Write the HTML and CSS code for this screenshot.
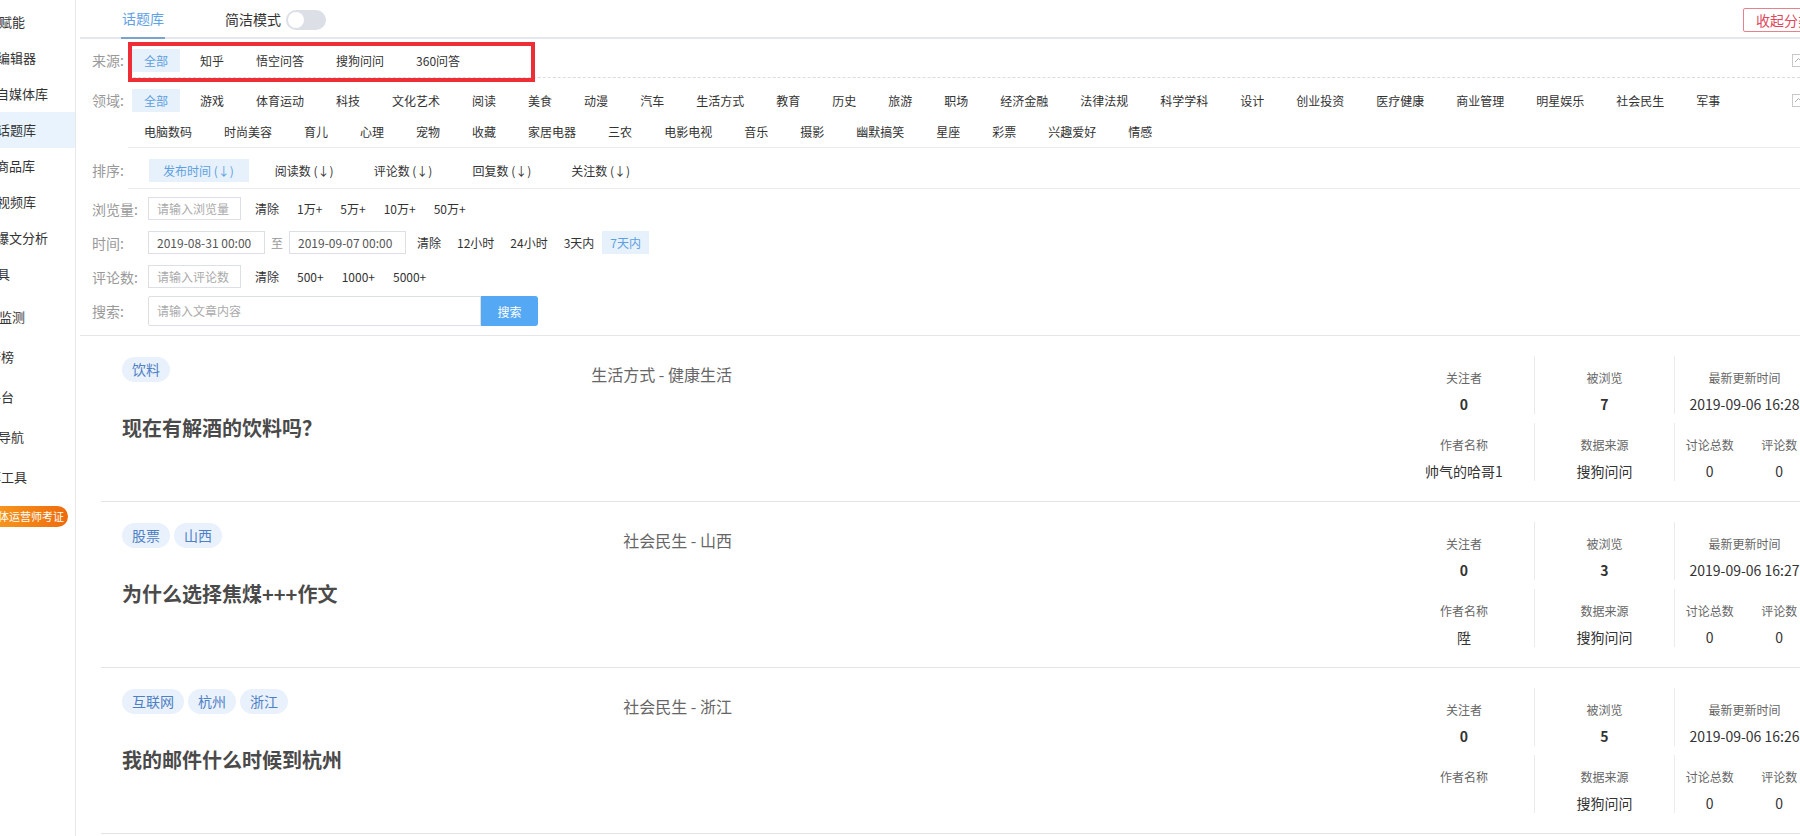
FILE: index.html
```html
<!DOCTYPE html>
<html lang="zh-CN">
<head>
<meta charset="utf-8">
<title>话题库</title>
<link rel="stylesheet" href="styles.css">
</head>
<body>
<div class="app">
  <aside class="sidebar">
    <ul class="nav nav-a">
      <li class="nav-item n1"><span>数据赋能</span></li>
      <li class="nav-item n2"><span>图文编辑器</span></li>
      <li class="nav-item n3"><span>自媒体库</span></li>
      <li class="nav-item n4 active"><span>话题库</span></li>
      <li class="nav-item n5"><span>商品库</span></li>
      <li class="nav-item n6"><span>视频库</span></li>
      <li class="nav-item n7"><span>爆文分析</span></li>
      <li class="nav-item n8"><span>工具</span></li>
    </ul>
    <ul class="nav nav-b">
      <li class="nav-item n9"><span>数据监测</span></li>
      <li class="nav-item n10"><span>排行榜</span></li>
      <li class="nav-item n11"><span>创作平台</span></li>
      <li class="nav-item n12"><span>网址导航</span></li>
      <li class="nav-item n13"><span>效率工具</span></li>
    </ul>
    <div class="badge">新媒体运营师考证</div>
  </aside>

  <main class="main">
    <header class="topbar">
      <div class="tabs">
        <div class="tab active">话题库</div>
        <div class="mode">简洁模式<span class="switch"><span class="knob"></span></span></div>
      </div>
      <button class="collapse-btn">收起分类</button>
    </header>

    <section class="filters">
      <div class="frow">
        <span class="flabel">来源:</span>
        <div class="fbody fb-src">
          <div class="opts">
            <span class="opt on">全部</span>
            <span class="opt">知乎</span>
            <span class="opt">悟空问答</span>
            <span class="opt">搜狗问问</span>
            <span class="opt">360问答</span>
          </div>
          <span class="fold"><svg width="13" height="13" viewBox="0 0 13 13"><rect x="0.5" y="0.5" width="12" height="12" fill="none" stroke="#c8c8c8"/><path d="M3 8 L6.5 4.5 L10 8" fill="none" stroke="#b0b0b0" stroke-width="1"/></svg></span>
        </div>
      </div>

      <div class="frow">
        <span class="flabel">领域:</span>
        <div class="fbody fb-field">
          <div class="opts">
            <span class="opt on">全部</span>
            <span class="opt">游戏</span>
            <span class="opt">体育运动</span>
            <span class="opt">科技</span>
            <span class="opt">文化艺术</span>
            <span class="opt">阅读</span>
            <span class="opt">美食</span>
            <span class="opt">动漫</span>
            <span class="opt">汽车</span>
            <span class="opt">生活方式</span>
            <span class="opt">教育</span>
            <span class="opt">历史</span>
            <span class="opt">旅游</span>
            <span class="opt">职场</span>
            <span class="opt">经济金融</span>
            <span class="opt">法律法规</span>
            <span class="opt">科学学科</span>
            <span class="opt">设计</span>
            <span class="opt">创业投资</span>
            <span class="opt">医疗健康</span>
            <span class="opt">商业管理</span>
            <span class="opt">明星娱乐</span>
            <span class="opt">社会民生</span>
            <span class="opt">军事</span>
            <span class="opt">电脑数码</span>
            <span class="opt">时尚美容</span>
            <span class="opt">育儿</span>
            <span class="opt">心理</span>
            <span class="opt">宠物</span>
            <span class="opt">收藏</span>
            <span class="opt">家居电器</span>
            <span class="opt">三农</span>
            <span class="opt">电影电视</span>
            <span class="opt">音乐</span>
            <span class="opt">摄影</span>
            <span class="opt">幽默搞笑</span>
            <span class="opt">星座</span>
            <span class="opt">彩票</span>
            <span class="opt">兴趣爱好</span>
            <span class="opt">情感</span>
          </div>
          <span class="fold"><svg width="13" height="13" viewBox="0 0 13 13"><rect x="0.5" y="0.5" width="12" height="12" fill="none" stroke="#c8c8c8"/><path d="M3 8 L6.5 4.5 L10 8" fill="none" stroke="#b0b0b0" stroke-width="1"/></svg></span>
        </div>
      </div>

      <div class="frow">
        <span class="flabel">排序:</span>
        <div class="fbody fb-sort">
          <div class="opts">
            <span class="sort on">发布时间 (↓)</span>
            <span class="sort">阅读数 (↓)</span>
            <span class="sort">评论数 (↓)</span>
            <span class="sort">回复数 (↓)</span>
            <span class="sort">关注数 (↓)</span>
          </div>
        </div>
      </div>

      <div class="inputs">
        <div class="irow">
          <span class="ilabel">浏览量:</span>
          <span class="inp inp-s">请输入浏览量</span>
          <span class="qk">清除</span>
          <span class="qk">1万+</span>
          <span class="qk">5万+</span>
          <span class="qk">10万+</span>
          <span class="qk">50万+</span>
        </div>
        <div class="irow irow-time">
          <span class="ilabel">时间:</span>
          <span class="inp inp-d">2019-08-31 00:00</span>
          <span class="to">至</span>
          <span class="inp inp-d">2019-09-07 00:00</span>
          <span class="qk">清除</span>
          <span class="qk">12小时</span>
          <span class="qk">24小时</span>
          <span class="qk">3天内</span>
          <span class="qk on">7天内</span>
        </div>
        <div class="irow">
          <span class="ilabel">评论数:</span>
          <span class="inp inp-s">请输入评论数</span>
          <span class="qk">清除</span>
          <span class="qk">500+</span>
          <span class="qk">1000+</span>
          <span class="qk">5000+</span>
        </div>
        <div class="irow irow-search">
          <span class="ilabel">搜索:</span>
          <span class="inp inp-q">请输入文章内容</span>
          <button class="sbtn">搜索</button>
        </div>
      </div>
    </section>

    <section class="cards">
      <article class="card">
        <div class="card-main">
          <div class="card-top">
            <div class="tags"><span class="tag">饮料</span></div>
            <div class="cat">生活方式 - 健康生活</div>
          </div>
          <h2 class="title">现在有解酒的饮料吗？</h2>
        </div>
        <div class="stats">
          <div class="cell"><div class="lbl">关注者</div><div class="val b">0</div></div>
          <div class="cell"><div class="lbl">被浏览</div><div class="val b">7</div></div>
          <div class="cell"><div class="lbl">最新更新时间</div><div class="val">2019-09-06 16:28</div></div>
          <div class="cell"><div class="lbl">作者名称</div><div class="val">帅气的哈哥1</div></div>
          <div class="cell"><div class="lbl">数据来源</div><div class="val">搜狗问问</div></div>
          <div class="cell split">
            <div class="sub"><div class="lbl">讨论总数</div><div class="val">0</div></div>
            <div class="sub"><div class="lbl">评论数</div><div class="val">0</div></div>
          </div>
        </div>
      </article>

      <article class="card">
        <div class="card-main">
          <div class="card-top">
            <div class="tags"><span class="tag">股票</span><span class="tag">山西</span></div>
            <div class="cat">社会民生 - 山西</div>
          </div>
          <h2 class="title">为什么选择焦煤+++作文</h2>
        </div>
        <div class="stats">
          <div class="cell"><div class="lbl">关注者</div><div class="val b">0</div></div>
          <div class="cell"><div class="lbl">被浏览</div><div class="val b">3</div></div>
          <div class="cell"><div class="lbl">最新更新时间</div><div class="val">2019-09-06 16:27</div></div>
          <div class="cell"><div class="lbl">作者名称</div><div class="val">陞</div></div>
          <div class="cell"><div class="lbl">数据来源</div><div class="val">搜狗问问</div></div>
          <div class="cell split">
            <div class="sub"><div class="lbl">讨论总数</div><div class="val">0</div></div>
            <div class="sub"><div class="lbl">评论数</div><div class="val">0</div></div>
          </div>
        </div>
      </article>

      <article class="card">
        <div class="card-main">
          <div class="card-top">
            <div class="tags"><span class="tag">互联网</span><span class="tag">杭州</span><span class="tag">浙江</span></div>
            <div class="cat">社会民生 - 浙江</div>
          </div>
          <h2 class="title">我的邮件什么时候到杭州</h2>
        </div>
        <div class="stats">
          <div class="cell"><div class="lbl">关注者</div><div class="val b">0</div></div>
          <div class="cell"><div class="lbl">被浏览</div><div class="val b">5</div></div>
          <div class="cell"><div class="lbl">最新更新时间</div><div class="val">2019-09-06 16:26</div></div>
          <div class="cell"><div class="lbl">作者名称</div><div class="val">&nbsp;</div></div>
          <div class="cell"><div class="lbl">数据来源</div><div class="val">搜狗问问</div></div>
          <div class="cell split">
            <div class="sub"><div class="lbl">讨论总数</div><div class="val">0</div></div>
            <div class="sub"><div class="lbl">评论数</div><div class="val">0</div></div>
          </div>
        </div>
      </article>
    </section>
  </main>

  <div class="annot"></div>
</div>
</body>
</html>
```

FILE: styles.css
```css
* { box-sizing: border-box; margin: 0; padding: 0; }
html, body { width: 1800px; height: 836px; overflow: hidden; background: #fff; }
body {
  font-family: "Noto Sans CJK SC", "Microsoft YaHei", "Liberation Sans", sans-serif;
  font-size: 12px;
  color: #333;
}
button { font-family: inherit; cursor: pointer; }

.app { position: relative; display: flex; height: 836px; }

/* ---------- sidebar ---------- */
.sidebar {
  width: 76px;
  flex: none;
  border-right: 1px solid #e8e8e8;
  overflow: hidden;
  padding-top: 4px;
}
.nav { list-style: none; }
.nav-item {
  height: 36px;
  line-height: 36px;
  font-size: 13px;
  color: #333;
  white-space: nowrap;
}
.nav-item span { display: block; }
.nav-item.active { background: #e8f3fd; }
.nav-b { margin-top: 5px; }
.nav-b .nav-item { height: 40px; line-height: 40px; }
.n1 span { margin-left: -27px; }
.n2 span { margin-left: -29px; }
.n3 span { margin-left: -4px; }
.n4 span { margin-left: -3px; }
.n5 span { margin-left: -4px; }
.n6 span { margin-left: -3px; }
.n7 span { margin-left: -4px; }
.n8 span { margin-left: -16px; }
.n9 span { margin-left: -27px; }
.n10 span { margin-left: -25px; }
.n11 span { margin-left: -38px; }
.n12 span { margin-left: -28px; }
.n13 span { margin-left: -25px; }
.badge {
  margin-top: 9px;
  margin-left: -32px;
  width: 100px;
  height: 21px;
  line-height: 21px;
  border-radius: 11px;
  background: linear-gradient(90deg, #f9a824, #ee6b0d);
  color: #fff;
  font-size: 11px;
  text-align: right;
  padding-right: 4px;
  white-space: nowrap;
  overflow: hidden;
}

/* ---------- main ---------- */
.main {
  width: 1764px;
  flex: none;
  padding-left: 4px;
}
.topbar {
  height: 39px;
  border-bottom: 2px solid #e4e7ed;
  display: flex;
  justify-content: space-between;
  padding-right: 15px;
}
.tabs { display: flex; align-items: center; }
.tab {
  position: relative;
  margin-left: 41px;
  padding: 0 1px;
  height: 37px;
  line-height: 37px;
  font-size: 14px;
  color: #5fa2e6;
}
.tab.active::after {
  content: "";
  position: absolute;
  left: 0; right: 0; bottom: -2px;
  height: 2px;
  background: #7aa3cf;
}
.mode {
  margin-left: 60px;
  display: flex;
  align-items: center;
  font-size: 14px;
  color: #333;
}
.switch {
  position: relative;
  margin-left: 5px;
  margin-top: 2px;
  width: 40px;
  height: 20px;
  border-radius: 10px;
  background: #dcdfe6;
}
.knob {
  position: absolute;
  left: 2px; top: 2px;
  width: 16px; height: 16px;
  border-radius: 50%;
  background: #fff;
}
.collapse-btn {
  margin-top: 8px;
  height: 24px;
  padding: 0 12px;
  border: 1px solid #e6828d;
  border-radius: 2px;
  background: #fff;
  color: #e0475a;
  font-size: 14px;
  line-height: 22px;
  align-self: flex-start;
}

/* ---------- filters ---------- */
.filters {
  padding-left: 12px;
  padding-right: 35px;
  border-bottom: 1px solid #e6e6e6;
}
.frow { display: flex; align-items: flex-start; }
.flabel {
  width: 36px;
  flex: none;
  font-size: 14px;
  color: #999;
  line-height: 23px;
}
.frow:nth-child(1) .flabel { margin-top: 10px; }
.frow:nth-child(2) .flabel { margin-top: 11px; }
.frow:nth-child(3) .flabel { margin-top: 11px; }
.fbody {
  flex: 1;
  display: flex;
  align-items: flex-start;
}
.fb-src { padding: 10px 0 5px 4px; border-bottom: 1px dashed #dcdcdc; }
.fb-field { padding: 11px 0 4px 4px; border-bottom: 1px solid #ececec; }
.fb-sort { padding: 11px 0 6px 21px; border-bottom: 1px solid #ececec; }
.opts { flex: 1; display: flex; flex-wrap: wrap; row-gap: 8px; }
.opt {
  padding: 0 12px;
  margin-right: 8px;
  line-height: 23px;
  font-size: 12px;
  color: #333;
  white-space: nowrap;
}
.opt.on, .sort.on, .qk.on { background: #e6f1fc; color: #5d9fe0; }
.fold { flex: none; margin-top: 5px; width: 13px; height: 13px; }
.fold svg { display: block; }
.sort {
  padding: 0 14px;
  margin-right: 12px;
  line-height: 23px;
  font-size: 12px;
  color: #333;
  white-space: nowrap;
}
.sort:first-child { padding: 0 15px 0 14px; }

.inputs {
  display: flex;
  flex-direction: column;
  gap: 11px;
  padding: 8px 0 9px;
}
.irow { display: flex; align-items: center; height: 23px; }
.irow-search { height: 30px; margin-top: -3px; }
.ilabel {
  width: 56px;
  flex: none;
  font-size: 14px;
  color: #999;
}
.inp {
  height: 23px;
  line-height: 21px;
  border: 1px solid #dcdfe6;
  padding: 0 8px;
  font-size: 12px;
  color: #999;
  white-space: nowrap;
}
.inp-s { width: 93px; color: #aaa; }
.inp-d { width: 117px; color: #555; }
.inp-q { width: 333px; height: 30px; line-height: 28px; color: #aaa; border-radius: 2px 0 0 2px; }
.to { margin: 0 6px; font-size: 12px; color: #999; }
.qk {
  padding: 0 9px;
  line-height: 23px;
  font-size: 12px;
  color: #333;
  white-space: nowrap;
}
.inp + .qk { margin-left: 5px; }
.irow-time .qk { padding: 0 8px; }
.irow-time .inp + .qk { margin-left: 3px; }
.sbtn {
  width: 57px;
  height: 30px;
  border: none;
  border-radius: 0 3px 3px 0;
  background: #55a8f4;
  color: #fff;
  font-size: 12px;
}

/* ---------- cards ---------- */
.cards { padding-left: 21px; }
.card {
  display: flex;
  justify-content: space-between;
  align-items: flex-start;
  height: 166px;
  border-bottom: 1px solid #e3e3e3;
  padding: 21px 26px 0 21px;
}
.card-main { width: 610px; }
.card-top { display: flex; justify-content: space-between; align-items: flex-start; }
.tags { display: flex; gap: 4px; }
.tag {
  height: 25px;
  line-height: 25px;
  padding: 0 10px;
  border-radius: 13px;
  background: #e9f1fc;
  color: #4f80c4;
  font-size: 14px;
  white-space: nowrap;
}
.cat {
  margin-top: 5px;
  font-size: 16px;
  line-height: 24px;
  color: #666;
  white-space: nowrap;
}
.title {
  margin-top: 28px;
  font-size: 20px;
  line-height: 28px;
  font-weight: bold;
  color: #4a4a4a;
  white-space: nowrap;
}
.stats {
  width: 420px;
  flex: none;
  display: grid;
  grid-template-columns: repeat(3, 140px);
  row-gap: 9px;
  margin-top: -1px;
}
.cell {
  height: 58px;
  padding-top: 14px;
  text-align: center;
  white-space: nowrap;
}
.cell:nth-child(3n+2), .cell:nth-child(3n) { border-left: 1px solid #ebebeb; }
.split { display: flex; }
.sub { width: 70px; }
.lbl { font-size: 12px; line-height: 16px; color: #666; }
.val { margin-top: 8px; font-size: 14px; line-height: 20px; color: #333; }
.val.b { font-weight: bold; }

/* ---------- annotation overlay ---------- */
.annot {
  position: absolute;
  left: 128px;
  top: 42px;
  width: 407px;
  height: 40px;
  border: 4px solid #ee2e36;
  pointer-events: none;
}
```
